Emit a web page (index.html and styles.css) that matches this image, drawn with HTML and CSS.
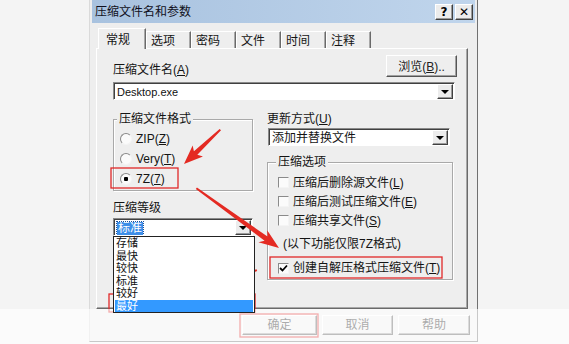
FILE: index.html
```html
<!DOCTYPE html>
<html>
<head>
<meta charset="utf-8">
<link rel="stylesheet" href="styles.css">
</head>
<body>
<div class="dialog">
  <div class="titlebar">
    <span class="title">压缩文件名和参数</span>
    <span class="tb-btns"><span class="tb-btn">?</span><span class="tb-btn">✕</span></span>
  </div>
  <div class="tabs">
    <span class="tab active">常规</span><span class="tab">选项</span><span class="tab">密码</span><span class="tab">文件</span><span class="tab">时间</span><span class="tab">注释</span>
  </div>
  <div class="panel">
    <div class="row1">
      <span class="label">压缩文件名(<u>A</u>)</span>
      <span class="btn browse">浏览(<u>B</u>)..</span>
    </div>
    <div class="combo full"><span class="combo-text latin">Desktop.exe</span><span class="drop"><span class="tri"></span></span></div>
    <div class="cols">
      <div class="col">
        <fieldset class="group fmt">
          <legend>压缩文件格式</legend>
          <div class="rows">
            <div class="opt"><span class="radio"></span><span>ZIP(<u>Z</u>)</span></div>
            <div class="opt"><span class="radio"></span><span>Very(<u>T</u>)</span></div>
            <div class="opt"><span class="radio on"></span><span>7Z(<u>7</u>)</span></div>
          </div>
        </fieldset>
        <div class="label level">压缩等级</div>
        <div class="combo-wrap">
          <div class="combo lvl"><span class="combo-text"><span class="hl">标准</span></span><span class="drop"><span class="tri"></span></span></div>
          <ul class="droplist">
            <li>存储</li><li>最快</li><li>较快</li><li>标准</li><li>较好</li><li class="sel">最好</li>
          </ul>
        </div>
      </div>
      <div class="col">
        <div class="label">更新方式(<u>U</u>)</div>
        <div class="combo upd"><span class="combo-text">添加并替换文件</span><span class="drop"><span class="tri"></span></span></div>
        <fieldset class="group opts">
          <legend>压缩选项</legend>
          <div class="rows">
            <div class="opt chk"><span class="box"></span><span>压缩后删除源文件(<u>L</u>)</span></div>
            <div class="opt chk"><span class="box"></span><span>压缩后测试压缩文件(<u>E</u>)</span></div>
            <div class="opt chk"><span class="box"></span><span>压缩共享文件(<u>S</u>)</span></div>
            <div class="note">(以下功能仅限7Z格式)</div>
            <div class="opt chk last"><span class="box"><svg width="9" height="9" viewBox="0 0 9 9"><polyline points="1,4 3.5,6.5 8,1.5" fill="none" stroke="#000" stroke-width="1.8"/></svg></span><span>创建自解压格式压缩文件(<u>T</u>)</span></div>
          </div>
        </fieldset>
      </div>
    </div>
  </div>
  <div class="footer">
    <span class="btn fbtn ok">确定</span><span class="btn fbtn cancel">取消</span><span class="btn fbtn help">帮助</span>
  </div>
</div>
<svg class="annot" width="569" height="344" viewBox="0 0 569 344">
  <g fill="none" stroke="#e02828" stroke-width="1.3">
    <rect x="111" y="168" width="67" height="20"/>
    <rect x="109" y="294" width="146" height="18"/>
    <rect x="270" y="257" width="172" height="21"/>
    <rect x="240" y="314" width="78" height="23"/>
  </g>
  <g fill="#e42a22">
    <g transform="translate(184,164) rotate(136.6)"><polygon points="-50,-1 -16,-2.5 -19,-7.5 0,0 -19,7.5 -16,2.5 -50,1"/></g>
    <g transform="translate(279,248) rotate(35.9)"><polygon points="-102,-1 -16,-2.5 -20,-7.5 0,0 -20,7.5 -16,2.5 -102,1"/></g>
    <g transform="translate(201,289) rotate(161.3)"><polygon points="-59,-1 -16,-2.5 -20,-7.5 0,0 -20,7.5 -16,2.5 -59,1"/></g>
  </g>
</svg>
<div class="fade"></div>
</body>
</html>
```
FILE: styles.css
```css
* { box-sizing: border-box; }
body {
  margin: 0;
  width: 569px;
  height: 344px;
  overflow: hidden;
  position: relative;
  background: #f4f4f4;
  font: 12px/14px "Liberation Sans", "Noto Sans CJK SC", sans-serif;
  color: #141414;
}
u { text-decoration: underline; text-underline-offset: 1px; }

.dialog {
  margin-left: 89px;
  width: 389px;
  height: 342px;
  background: #eeeeee;
  border-left: 1px solid #dadada;
  border-right: 1px solid #707070;
  border-bottom: 1px solid #707070;
  padding: 0 2px;
}
.titlebar {
  height: 23px;
  display: flex;
  align-items: center;
  padding-left: 3px;
  background: linear-gradient(90deg, #a8c2df, #c0d5ec);
}
.title { color: #101020; font-size: 12px; }
.tb-btns { margin-left: auto; margin-right: 2px; display: flex; gap: 2px; }
.tb-btn {
  width: 18px;
  height: 16px;
  background: #ececec;
  border: 1px solid;
  border-color: #ffffff #404040 #404040 #ffffff;
  box-shadow: inset -1px -1px 0 #9a9a9a;
  display: flex;
  align-items: center;
  justify-content: center;
  font: bold 12px/1 "DejaVu Sans", sans-serif;
  color: #000;
}

.tabs {
  height: 25px;
  display: flex;
  align-items: flex-end;
  padding-left: 6px;
}
.tab {
  width: 45px;
  height: 17px;
  padding: 2px 0 0 4px;
  line-height: 14px;
  border-top: 1px solid #fff;
  border-left: 1px solid #fff;
  border-right: 1px solid #6a6a6a;
  box-shadow: inset -1px 0 0 #a8a8a8;
}
.tab.active {
  width: 48px;
  height: 21px;
  padding: 4px 0 0 7px;
  margin-bottom: -1px;
  background: #eeeeee;
  position: relative;
  z-index: 1;
}

.panel {
  margin: 0 7px 0 4px;
  height: 261px;
  border: 1px solid;
  border-color: #ffffff #6a6a6a #6a6a6a #ffffff;
  box-shadow: inset -1px -1px 0 #a8a8a8;
  padding: 6px 10px 0 16px;
}
.row1 {
  height: 22px;
  display: flex;
  justify-content: space-between;
  align-items: flex-end;
}
.label { line-height: 14px; }
.btn {
  display: flex;
  align-items: center;
  justify-content: center;
  background: #eeeeee;
  border: 1px solid;
  border-color: #ffffff #555555 #555555 #ffffff;
  box-shadow: inset -1px -1px 0 #a0a0a0;
  color: #222;
}
.browse { width: 71px; height: 22px; padding-top: 1px; }

.combo {
  height: 18px;
  display: flex;
  align-items: center;
  background: #fff;
  border: 1px solid;
  border-color: #8a8a8a #ffffff #ffffff #8a8a8a;
  box-shadow: inset 1px 1px 0 #404040;
  padding: 1px 1px 0 2px;
}
.combo.full { margin-top: 5px; margin-right: 2px; }
.combo-text { flex: 1; padding-left: 1px; white-space: nowrap; overflow: hidden; }
.latin { font: 11px/14px "Liberation Sans", sans-serif; color: #111; }
.drop {
  width: 16px;
  height: 15px;
  background: #ececec;
  border: 1px solid;
  border-color: #ffffff #404040 #404040 #ffffff;
  box-shadow: inset -1px -1px 0 #9a9a9a;
  display: flex;
  align-items: center;
  justify-content: center;
}
.tri {
  width: 0;
  height: 0;
  border-left: 4px solid transparent;
  border-right: 4px solid transparent;
  border-top: 4px solid #000;
  margin-top: 1px;
}

.cols {
  margin-top: 12px;
  display: grid;
  grid-template-columns: 140px 186px;
  column-gap: 14px;
  align-items: start;
}
.col { display: flex; flex-direction: column; }

.group {
  margin: 0;
  min-width: 0;
  border: 1px solid #a9a9a9;
  box-shadow: inset 1px 1px 0 #ffffff, 1px 1px 0 #ffffff;
}
.group legend {
  padding: 0 2px;
  line-height: 14px;
  background: #eeeeee;
}
.fmt { padding: 0 0 1px 3px; }
.fmt .rows { padding-top: 3px; }
.opt { height: 20px; display: flex; align-items: center; }
.radio {
  width: 12px;
  height: 12px;
  margin: 0 4px 0 3px;
  border-radius: 50%;
  border: 1px solid;
  border-color: #8a8a8a #f4f4f4 #f4f4f4 #8a8a8a;
  background: #fbfbfb;
}
.radio.on { background: radial-gradient(circle, #000 0 2px, #fbfbfb 2.5px); }

.level { margin-top: 11px; line-height: 12px; }
.combo-wrap { margin-top: 4px; position: relative; }
.combo.lvl { width: 140px; }
.hl {
  background: #3d8ee8;
  color: #fff;
  outline: 1px dotted #1a4f9a;
  padding: 0 1px;
  line-height: 13px;
  display: inline-block;
}
.droplist {
  position: absolute;
  top: 100%;
  left: 0;
  width: 142px;
  height: 77px;
  margin: 0;
  padding: 0 1px;
  list-style: none;
  background: #fff;
  border: 1px solid #222;
  z-index: 2;
}
.droplist li {
  height: 12.5px;
  line-height: 12.5px;
  font-size: 11px;
  padding-left: 1px;
  color: #111;
}
.droplist li.sel { background: #3399ff; color: #fff; }

.combo.upd { margin-top: 2px; margin-left: 1px; width: 182px; }
.opts { margin-top: 9px; padding: 0 0 1px 8px; }
.opts .rows { padding-top: 4px; }
.opt.chk { height: 19px; }
.box {
  width: 11px;
  height: 11px;
  margin: 0 4px 0 2px;
  background: #fbfbfb;
  border: 1px solid;
  border-color: #8a8a8a #f4f4f4 #f4f4f4 #8a8a8a;
  display: flex;
  align-items: center;
  justify-content: center;
}
.note { margin: 6px 0 0 7px; height: 16px; line-height: 16px; }
.opt.chk.last { margin-top: 6px; height: 20px; }

.footer {
  margin-top: 6px;
  padding-left: 150px;
  display: flex;
  gap: 5px;
}
.fbtn { height: 20px; }
.ok { width: 75px; }
.cancel { width: 71px; }
.help { width: 72px; }

.annot { position: absolute; left: 0; top: 0; pointer-events: none; }
.fade {
  position: absolute;
  left: 0;
  right: 0;
  top: 309px;
  bottom: 0;
  background: rgba(255, 255, 255, 0.62);
}
```
